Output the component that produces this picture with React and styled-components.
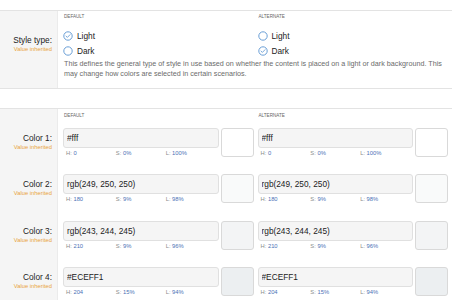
import React from "react";
import styled, { createGlobalStyle } from "styled-components";

const GlobalStyle = createGlobalStyle`
  body {
    margin: 0;
    background: #fff;
    font-family: "Liberation Sans", Arial, sans-serif;
    font-size: 8.3px;
    color: #222;
  }
`;

const Page = styled.div`
  padding-top: 10px;
`;

const Section = styled.div`
  border-top: 1px solid #e3e3e3;
  border-bottom: ${(p) => (p.$open ? "none" : "1px solid #e3e3e3")};
  margin-bottom: 19px;
`;

const Row = styled.div`
  display: flex;
  height: ${(p) => p.$height || "auto"};
`;

const LabelCell = styled.div`
  width: 58px;
  flex-shrink: 0;
  box-sizing: border-box;
  background: #f5f5f5;
  border-right: 1px solid #ebebeb;
  text-align: right;
  padding: ${(p) => p.$top || "0"} 5px 0 0;
`;

const RowLabel = styled.div`
  line-height: 10px;
  color: #222;
`;

const Inherited = styled.div`
  font-size: 5.8px;
  line-height: 8px;
  color: #e9a43c;
`;

const Content = styled.div`
  flex: 1;
  min-width: 0;
  padding: ${(p) => p.$pad || "0"};
  padding-left: 5px;
  padding-right: 4px;
`;

const Columns = styled.div`
  display: grid;
  grid-template-columns: 1fr 1fr;
  column-gap: 4px;
`;

const ColHeader = styled.div`
  font-size: 4.6px;
  line-height: 6px;
  color: #666;
  text-transform: uppercase;
  padding-left: 1px;
`;

const RadioList = styled.div`
  margin-top: 8.5px;
`;

const RadioOption = styled.div`
  display: flex;
  align-items: center;
  gap: 4px;
  height: 15px;
  color: #222;
`;

const Description = styled.p`
  margin: 0;
  padding-left: 1px;
  font-size: 7.2px;
  line-height: 10px;
  color: #6b6b6b;
`;

const ColorField = styled.div`
  display: flex;
  gap: 2px;
  align-items: flex-start;
`;

const ValueBox = styled.div`
  flex: 1;
  min-width: 0;
`;

const ColorInput = styled.input`
  display: block;
  width: 100%;
  height: 20px;
  box-sizing: border-box;
  margin: 0;
  padding: 0 3px;
  border: 1px solid #e0e0e0;
  border-radius: 3px;
  background: #f5f5f5;
  font-family: "Liberation Sans", Arial, sans-serif;
  font-size: 8.3px;
  color: #222;
  outline: none;
`;

const HslLine = styled.div`
  display: grid;
  grid-template-columns: repeat(3, 1fr);
  padding: 0 3px;
  font-size: 5.8px;
  line-height: 10px;
  color: #8c8c8c;
`;

const HslValue = styled.span`
  color: #4c72b6;
`;

const Swatch = styled.div`
  width: 33px;
  height: 29px;
  flex-shrink: 0;
  box-sizing: border-box;
  border: 1px solid #d9d9d9;
  border-radius: 3px;
  background: ${(p) => p.$color};
`;

function RadioIcon({ checked }) {
  return (
    <svg width="10" height="10" viewBox="0 0 10 10">
      <circle cx="5" cy="5" r="4.2" fill="#fff" stroke="#6b9fd6" strokeWidth="1" />
      {checked && (
        <path
          d="M3 5.1 L4.4 6.4 L7 3.7"
          fill="none"
          stroke="#6b9fd6"
          strokeWidth="0.9"
          strokeLinecap="round"
          strokeLinejoin="round"
        />
      )}
    </svg>
  );
}

function Radio({ label, checked }) {
  return (
    <RadioOption>
      <RadioIcon checked={checked} />
      <span>{label}</span>
    </RadioOption>
  );
}

function ColorValue({ value, color, h, s, l }) {
  return (
    <ColorField>
      <ValueBox>
        <ColorInput readOnly value={value} />
        <HslLine>
          <span>
            H: <HslValue>{h}</HslValue>
          </span>
          <span>
            S: <HslValue>{s}%</HslValue>
          </span>
          <span>
            L: <HslValue>{l}%</HslValue>
          </span>
        </HslLine>
      </ValueBox>
      <Swatch $color={color} />
    </ColorField>
  );
}

const colors = [
  { name: "Color 1:", value: "#fff", color: "#fff", h: 0, s: 0, l: 100 },
  { name: "Color 2:", value: "rgb(249, 250, 250)", color: "rgb(249, 250, 250)", h: 180, s: 9, l: 98 },
  { name: "Color 3:", value: "rgb(243, 244, 245)", color: "rgb(243, 244, 245)", h: 210, s: 9, l: 96 },
  { name: "Color 4:", value: "#ECEFF1", color: "#ECEFF1", h: 204, s: 15, l: 94 },
];

export default function App() {
  return (
    <Page>
      <GlobalStyle />
      <Section>
        <Row>
          <LabelCell $top="24px">
            <RowLabel>Style type:</RowLabel>
            <Inherited>Value inherited</Inherited>
          </LabelCell>
          <Content $pad="3px 0 9.5px">
            <Columns>
              <div>
                <ColHeader>Default</ColHeader>
                <RadioList>
                  <Radio label="Light" checked />
                  <Radio label="Dark" />
                </RadioList>
              </div>
              <div>
                <ColHeader>Alternate</ColHeader>
                <RadioList>
                  <Radio label="Light" />
                  <Radio label="Dark" checked />
                </RadioList>
              </div>
            </Columns>
            <Description>
              This defines the general type of style in use based on whether the content is placed on a
              light or dark background. This may change how colors are selected in certain scenarios.
            </Description>
          </Content>
        </Row>
      </Section>

      <Section $open>
        <Row>
          <LabelCell />
          <Content $pad="4px 0 9px">
            <Columns>
              <ColHeader>Default</ColHeader>
              <ColHeader>Alternate</ColHeader>
            </Columns>
          </Content>
        </Row>
        {colors.map((c) => (
          <Row key={c.name} $height="46.33px">
            <LabelCell $top="5px">
              <RowLabel>{c.name}</RowLabel>
              <Inherited>Value inherited</Inherited>
            </LabelCell>
            <Content>
              <Columns>
                <ColorValue {...c} />
                <ColorValue {...c} />
              </Columns>
            </Content>
          </Row>
        ))}
      </Section>
    </Page>
  );
}
